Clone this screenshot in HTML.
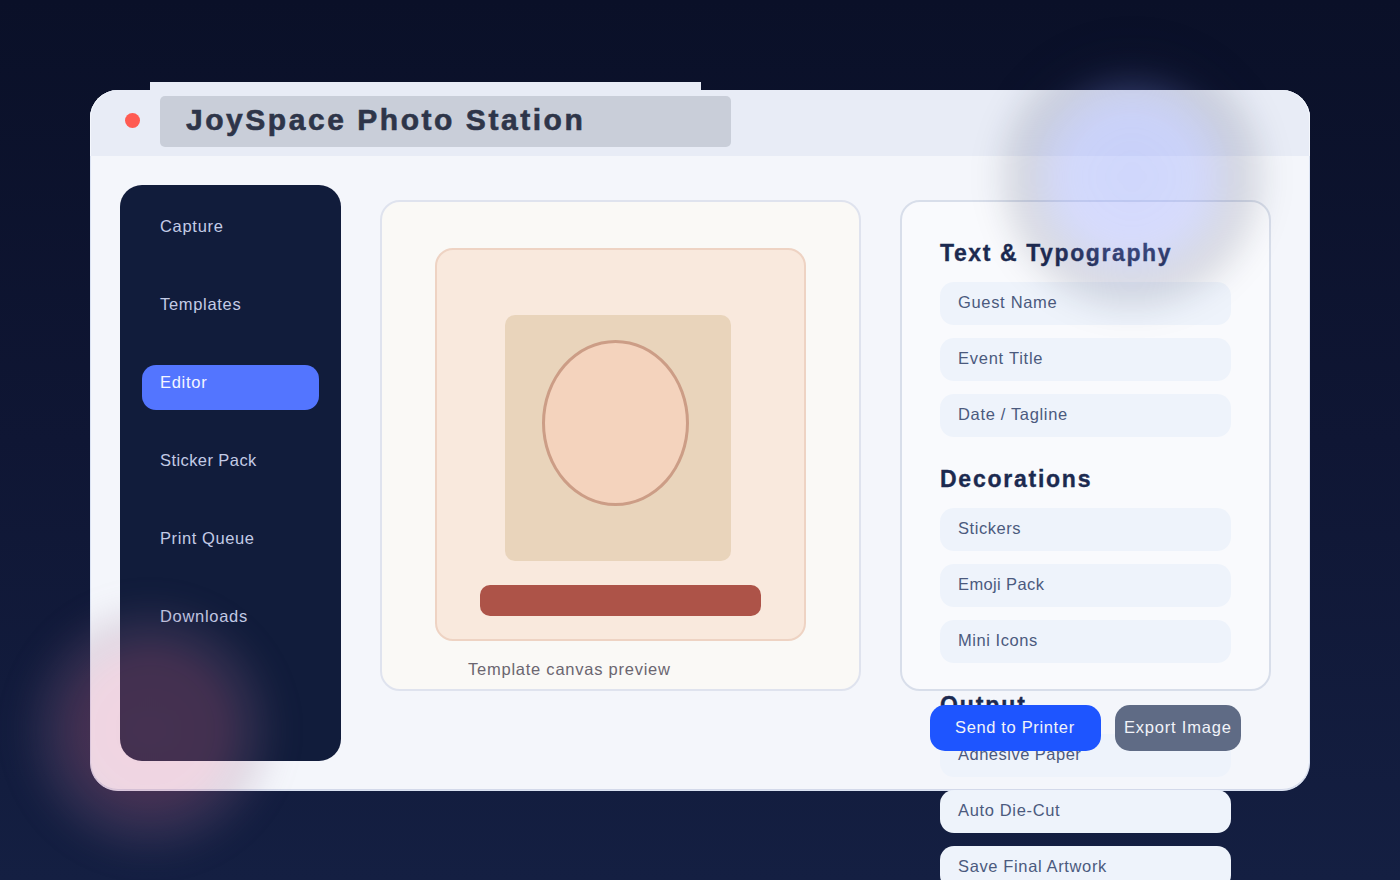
<!DOCTYPE html>
<html><head><meta charset="utf-8">
<style>
*{margin:0;padding:0;box-sizing:border-box}
html,body{width:1400px;height:880px;overflow:hidden}
body{position:relative;background:linear-gradient(180deg,#0a1028 0%,#0f1634 50%,#141f42 100%);font-family:"Liberation Sans",sans-serif}
.a{position:absolute}
.t{position:absolute;white-space:nowrap;line-height:20px;font-size:16.5px}
#win{left:90px;top:90px;width:1220px;height:701px;border-radius:28px;background:#f4f6fb;border:1px solid #dbe3f3;box-shadow:inset 0 -1px 0 #d3d9ea}
#hdr{left:90px;top:90px;width:1220px;height:66px;border-radius:28px 28px 0 0;background:#e8ecf6;box-shadow:inset 1px 0 0 #f4f7fd,inset -1px 0 0 #f4f7fd}
#strip{left:150px;top:82px;width:551px;height:14px;background:#e8ecf6}
#dot{left:125px;top:113px;width:15px;height:15px;border-radius:50%;background:#ff5b52}
#tbox{left:160px;top:96px;width:571px;height:51px;border-radius:5px;background:#c9ced9}
#title{left:186px;top:102.5px;font-size:30px;font-weight:bold;color:#2e3549;line-height:34px;letter-spacing:2.54px;-webkit-text-stroke:.6px #2e3549}
#side{left:120px;top:185px;width:221px;height:576px;border-radius:22px;background:#111c3b}
.nav{color:#c3cbe6;left:160px}
#pill{left:142px;top:365px;width:177px;height:45px;border-radius:14px;background:#5375ff}
#cv{left:380px;top:200px;width:481px;height:491px;border-radius:20px;border:2px solid #dfe3ee;background:#faf9f6}
#card{left:435px;top:248px;width:371px;height:393px;border-radius:18px;border:2px solid #eed3c3;background:#f9e9dd}
#photo{left:505px;top:315px;width:226px;height:246px;border-radius:10px;background:#e9d4bb}
#face{left:542px;top:340px;width:147px;height:166px;border-radius:50%;border:3px solid #cc9d86;background:#f4d3bd}
#bar{left:480px;top:585px;width:281px;height:31px;border-radius:10px;background:#ad5348}
#cap{left:468px;color:#6b6670}
#rp{left:900px;top:200px;width:371px;height:491px;border-radius:20px;border:2px solid #d8deea;background:#f9fafd}
.h{left:940px;font-size:23px;font-weight:bold;color:#1c2a50;line-height:26px;-webkit-text-stroke:.35px #1c2a50}
.f{left:940px;width:291px;height:43px;border-radius:14px;background:#eef3fb}
.fl{left:958px;color:#4b5a7e}
.btn{top:705px;height:46px;border-radius:15px}
#b1{left:930px;width:171px;background:#1e55ff}
#b2{left:1115px;width:126px;background:#5f6b85}
.bt{color:#f1f3f9}
#blob1{left:982px;top:27px;width:300px;height:300px;border-radius:50%;filter:blur(14px);background:radial-gradient(circle closest-side,rgba(138,154,255,.34) 0%,rgba(138,154,255,.31) 45%,rgba(105,116,190,.24) 60%,rgba(22,28,62,.15) 72%,rgba(10,15,40,.09) 83%,rgba(10,15,40,0) 95%)}
#blob2{left:-10px;top:570px;width:320px;height:320px;border-radius:50%;filter:blur(12px);background:radial-gradient(circle closest-side,rgba(228,112,148,.25) 0%,rgba(228,112,148,.24) 44%,rgba(170,105,140,.22) 55%,rgba(139,100,135,.17) 67%,rgba(139,100,135,.05) 78%,rgba(139,100,135,0) 87%)}
</style></head><body>
<div class="a" id="win"></div>
<div class="a" id="hdr"></div>
<div class="a" id="strip"></div>
<div class="a" id="dot"></div>
<div class="a" id="tbox"></div>
<div class="t" id="title">JoySpace Photo Station</div>

<div class="a" id="side"></div>
<div class="a" id="pill"></div>
<div class="t nav" style="top:216px;letter-spacing:.7px">Capture</div>
<div class="t nav" style="top:294px;letter-spacing:.69px">Templates</div>
<div class="t nav" style="top:372px;letter-spacing:.71px;color:#f4f6ff">Editor</div>
<div class="t nav" style="top:450px;letter-spacing:.42px">Sticker Pack</div>
<div class="t nav" style="top:528px;letter-spacing:.59px">Print Queue</div>
<div class="t nav" style="top:606px;letter-spacing:.7px">Downloads</div>

<div class="a" id="cv"></div>
<div class="a" id="card"></div>
<div class="a" id="photo"></div>
<div class="a" id="face"></div>
<div class="a" id="bar"></div>
<div class="t" id="cap" style="top:659px;letter-spacing:.76px">Template canvas preview</div>

<div class="a" id="rp"></div>
<div class="t h" style="top:240px;letter-spacing:1.6px">Text &amp; Typography</div>
<div class="a f" style="top:282px"></div>
<div class="a f" style="top:338px"></div>
<div class="a f" style="top:394px"></div>
<div class="t fl" style="top:292px;letter-spacing:.67px">Guest Name</div>
<div class="t fl" style="top:348px;letter-spacing:.75px">Event Title</div>
<div class="t fl" style="top:404px;letter-spacing:.66px">Date / Tagline</div>

<div class="t h" style="top:466px;letter-spacing:1.75px">Decorations</div>
<div class="a f" style="top:508px"></div>
<div class="a f" style="top:564px"></div>
<div class="a f" style="top:620px"></div>
<div class="t fl" style="top:518px;letter-spacing:.56px">Stickers</div>
<div class="t fl" style="top:574px;letter-spacing:.38px">Emoji Pack</div>
<div class="t fl" style="top:630px;letter-spacing:.55px">Mini Icons</div>

<div class="t h" style="top:692px;letter-spacing:1.9px">Output</div>
<div class="a f" style="top:734px"></div>
<div class="a f" style="top:790px"></div>
<div class="a f" style="top:846px"></div>
<div class="t fl" style="top:744px;letter-spacing:.49px">Adhesive Paper</div>
<div class="t fl" style="top:800px;letter-spacing:.65px">Auto Die-Cut</div>
<div class="t fl" style="top:856px;letter-spacing:.63px">Save Final Artwork</div>

<div class="a btn" id="b1"></div>
<div class="a btn" id="b2"></div>
<div class="t bt" style="left:955px;top:717px;letter-spacing:.65px">Send to Printer</div>
<div class="t bt" style="left:1124px;top:717px;letter-spacing:.79px">Export Image</div>
<div class="a" id="blob1"></div>
<div class="a" id="blob2"></div>
</body></html>
